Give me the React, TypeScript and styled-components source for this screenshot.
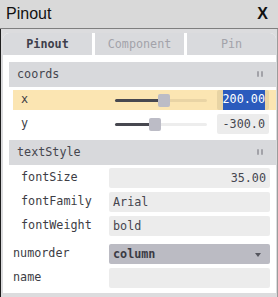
import styled, { createGlobalStyle } from "styled-components";

const GlobalStyle = createGlobalStyle`
  html, body {
    margin: 0;
    padding: 0;
    background: #ffffff;
  }
  * {
    box-sizing: border-box;
  }
`;

const mono = `"DejaVu Sans Mono", "Liberation Mono", monospace`;

const Window = styled.div`
  width: 278px;
  height: 297px;
  display: flex;
  flex-direction: column;
  overflow: hidden;
`;

const TitleBar = styled.header`
  height: 29px;
  flex: none;
  display: flex;
  align-items: center;
  justify-content: space-between;
  padding: 0 10px 1px 6px;
  background: #d9d9d9;
  border-bottom: 1px solid #7f7f7f;
  font-family: "Liberation Sans", Arial, sans-serif;
  font-size: 16px;
  color: #111;
`;

const Close = styled.span`
  font-weight: bold;
`;

const Body = styled.div`
  flex: 1;
  display: flex;
  flex-direction: column;
  background: #dcdcde;
  border-left: 1px solid #1e1e1e;
  border-right: 1px solid #9c9c9c;
  padding: 4px 1px 4px 2px;
`;

const Panel = styled.div`
  flex: 1;
  display: flex;
  flex-direction: column;
  background: #ffffff;
  border-radius: 6px 6px 0 0;
  overflow: hidden;
`;

const Tabs = styled.div`
  display: grid;
  grid-template-columns: 1fr 1fr 1fr;
  gap: 3px;
  height: 22px;
  flex: none;
  margin-bottom: 2px;
`;

const Tab = styled.div<{ $active?: boolean }>`
  display: flex;
  align-items: center;
  justify-content: center;
  background: #d9dadd;
  font-family: ${mono};
  font-size: 11.75px;
  font-weight: ${(p) => (p.$active ? "bold" : "normal")};
  color: ${(p) => (p.$active ? "#3e3f4b" : "#a3a3aa")};
`;

const Content = styled.div`
  flex: 1;
  display: flex;
  flex-direction: column;
  padding: 5px 0 0 6px;
  font-family: ${mono};
  font-size: 11.75px;
  color: #3d3d45;
`;

const Folder = styled.section<{ $gap: number }>`
  display: flex;
  flex-direction: column;
  margin-bottom: ${(p) => p.$gap}px;
`;

const FolderHeader = styled.div`
  height: 25px;
  display: flex;
  align-items: center;
  justify-content: space-between;
  padding: 0 13px 1px 8px;
  background: #d8d9dc;
  color: #45464f;
`;

const Handle = styled.span`
  display: flex;
  gap: 2px;
  & > i {
    width: 2px;
    height: 6px;
    border-radius: 1px;
    background: #a2a2a8;
  }
`;

const FolderBody = styled.div`
  display: flex;
  flex-direction: column;
  gap: 4px;
  padding: 3px 0 0 4px;
`;

const Row = styled.div<{ $label: number; $hl?: boolean }>`
  display: grid;
  grid-template-columns: ${(p) => p.$label}px 1fr;
  align-items: center;
  height: 20px;
  padding-right: 6px;
  background: ${(p) => (p.$hl ? "#fbe5b2" : "transparent")};
`;

const Label = styled.span<{ $pad: number }>`
  padding-left: ${(p) => p.$pad}px;
  padding-bottom: 2px;
  white-space: nowrap;
`;

const SliderCell = styled.div`
  display: flex;
  align-items: center;
  gap: 10px;
  padding-left: 6px;
`;

const Track = styled.div`
  position: relative;
  width: 92px;
  height: 3px;
  border-radius: 2px;
  background: rgba(0, 0, 0, 0.07);
`;

const Fill = styled.div`
  height: 100%;
  border-radius: 2px;
  background: #474850;
`;

const Thumb = styled.div`
  position: absolute;
  top: -5px;
  width: 12px;
  height: 13px;
  margin-left: -6px;
  border-radius: 2px;
  background: #bcbcc6;
`;

const Field = styled.div<{ $align?: string; $w?: number }>`
  height: 20px;
  width: ${(p) => (p.$w ? `${p.$w}px` : "100%")};
  padding: 0 4px;
  border-radius: 2px;
  background: rgba(0, 0, 0, 0.075);
  display: flex;
  align-items: center;
  justify-content: ${(p) => (p.$align === "right" ? "flex-end" : "flex-start")};
  overflow: hidden;
  white-space: nowrap;
  color: #45464f;
  padding-bottom: 1px;
`;

const Selected = styled.span`
  height: 20px;
  line-height: 19px;
  margin-bottom: -1px;
  background: #2b5bbd;
  color: #ffffff;
`;

const Select = styled.div`
  height: 20px;
  display: flex;
  align-items: center;
  justify-content: space-between;
  padding: 0 9px 1px 4px;
  border-radius: 2px;
  background: #bbbbc3;
  color: #3a3a44;
  font-weight: bold;
`;

const Caret = styled.span`
  width: 0;
  height: 0;
  border-left: 3px solid transparent;
  border-right: 3px solid transparent;
  border-top: 4px solid #55565e;
  margin-top: 2px;
`;

const Plain = styled.div`
  display: flex;
  flex-direction: column;
  gap: 4px;
`;

function SliderRow({ label, value, pct, hl, selected }: { label: string; value: string; pct: number; hl?: boolean; selected?: boolean }) {
  return (
    <Row $label={96} $hl={hl}>
      <Label $pad={8}>{label}</Label>
      <SliderCell>
        <Track>
          <Fill style={{ width: `${pct}%` }} />
          <Thumb style={{ left: `${pct}%` }} />
        </Track>
        <Field $align="right" $w={52}>
          {selected ? <Selected>{value}</Selected> : value}
        </Field>
      </SliderCell>
    </Row>
  );
}

function TextRow({ label, value, right }: { label: string; value: string; right?: boolean }) {
  return (
    <Row $label={96}>
      <Label $pad={8}>{label}</Label>
      <Field $align={right ? "right" : "left"}>{value}</Field>
    </Row>
  );
}

export default function App() {
  return (
    <>
      <GlobalStyle />
      <Window>
        <TitleBar>
          <span>Pinout</span>
          <Close>X</Close>
        </TitleBar>
        <Body>
          <Panel>
            <Tabs>
              <Tab $active>Pinout</Tab>
              <Tab>Component</Tab>
              <Tab>Pin</Tab>
            </Tabs>
            <Content>
              <Folder $gap={6}>
                <FolderHeader>
                  coords
                  <Handle>
                    <i />
                    <i />
                  </Handle>
                </FolderHeader>
                <FolderBody>
                  <SliderRow label="x" value="200.00" pct={53} hl selected />
                  <SliderRow label="y" value="-300.0" pct={43.5} />
                </FolderBody>
              </Folder>
              <Folder $gap={8}>
                <FolderHeader>
                  textStyle
                  <Handle>
                    <i />
                    <i />
                  </Handle>
                </FolderHeader>
                <FolderBody>
                  <TextRow label="fontSize" value="35.00" right />
                  <TextRow label="fontFamily" value="Arial" />
                  <TextRow label="fontWeight" value="bold" />
                </FolderBody>
              </Folder>
              <Plain>
                <Row $label={100}>
                  <Label $pad={4}>numorder</Label>
                  <Select>
                    column
                    <Caret />
                  </Select>
                </Row>
                <Row $label={100}>
                  <Label $pad={4}>name</Label>
                  <Field />
                </Row>
              </Plain>
            </Content>
          </Panel>
        </Body>
      </Window>
    </>
  );
}
